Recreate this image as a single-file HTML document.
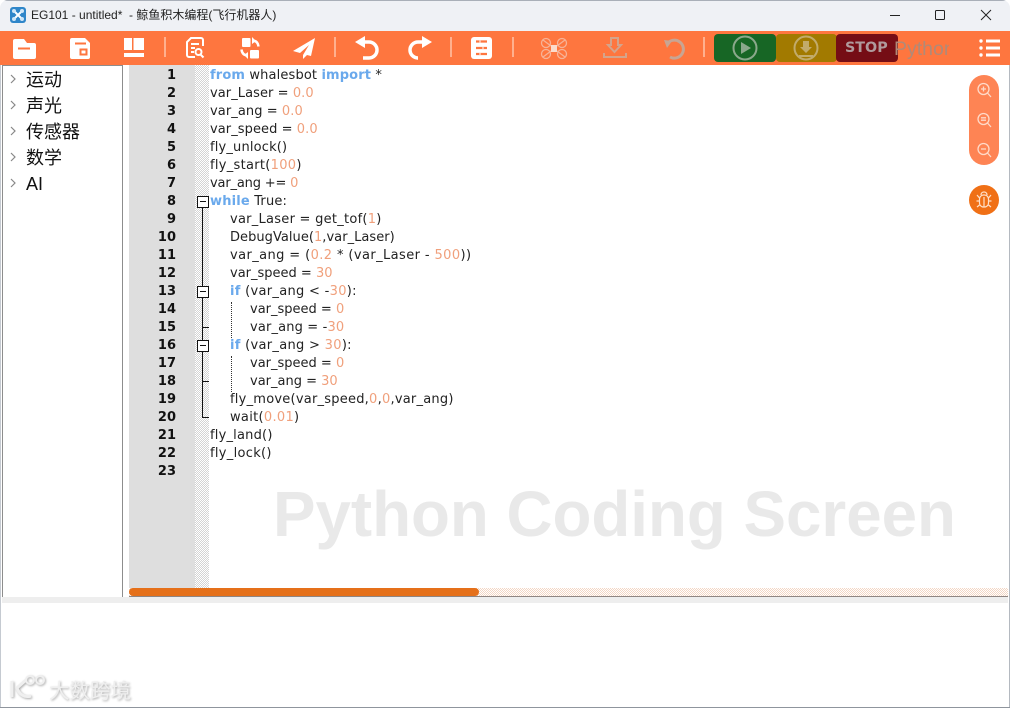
<!DOCTYPE html>
<html><head><meta charset="utf-8"><style>
html,body{margin:0;padding:0;width:1010px;height:708px;overflow:hidden;background:#fff}
*{box-sizing:border-box}
.a{position:absolute}
#code,#nums{position:absolute;left:0;top:4px}
#code div{position:absolute;left:210px;height:18px;white-space:pre;font:13px/18px "DejaVu Sans",sans-serif;color:#222}
b.k{color:#6aa9ec;font-weight:700}
i.n{color:#f0a07c;font-style:normal}
.ln{position:absolute;left:130px;width:46px;text-align:right;font:bold 13px/18px "DejaVu Sans",sans-serif;color:#111}
.tree{position:absolute;left:26px;font:18px/26px "Liberation Sans","Noto Sans CJK SC",sans-serif;color:#111}
.box{position:absolute;left:197px;width:12px;height:12px;border:1px solid #111;background:#fff}
.box:after{content:"";position:absolute;left:2px;top:4px;width:6px;height:1px;background:#111}
</style></head><body>
<div class="a" style="left:0;top:0;width:1010px;height:708px;background:#fff;border-radius:8px 8px 0 0;overflow:hidden">
<div class="a" style="left:0;top:0;width:1010px;height:31px;background:#eff1f5"></div>
<div class="a" style="left:0;top:0;width:1010px;height:1px;background:#a9afb8"></div>
<svg class="a" style="left:10px;top:7px" width="16" height="16" viewBox="0 0 16 16"><rect width="16" height="16" rx="3" fill="#2f86c9"/><path d="M4 4l8 8M12 4l-8 8" stroke="#fff" stroke-width="2"/><circle cx="4" cy="4" r="2" fill="#cfe6f7"/><circle cx="12" cy="4" r="2" fill="#cfe6f7"/><circle cx="4" cy="12" r="2" fill="#cfe6f7"/><circle cx="12" cy="12" r="2" fill="#cfe6f7"/></svg>
<div class="a" style="left:31px;top:7px;font:12px/17px 'Liberation Sans','Noto Sans CJK SC',sans-serif;color:#222;white-space:pre">EG101 - untitled*  - 鲸鱼积木编程(飞行机器人)</div>
<svg class="a" style="left:890px;top:0" width="120" height="31" viewBox="0 0 120 31" fill="none" stroke="#222" stroke-width="1"><path d="M0 15.500h10"/><rect x="45.500" y="10.500" width="9" height="9" rx="1"/><path d="M91 10l10 10M101 10l-10 10"/></svg>

<div class="a" style="left:0;top:31px;width:1010px;height:34px;background:#fe763f"></div>
<svg class="a" style="left:0;top:31px" width="1010" height="34" viewBox="0 0 1010 34">
<g fill="#fff">
<path d="M13 10a2 2 0 0 1 2-2h9l3 4h7a2 2 0 0 1 2 2v12a2 2 0 0 1-2 2H15a2 2 0 0 1-2-2z"/>
<path d="M72 7h13l5 5v14a2 2 0 0 1-2 2H72a2 2 0 0 1-2-2V9a2 2 0 0 1 2-2z"/>
<path d="M124 7h8v12h-8zM133.500 7h10.500v12h-10.500zM124 22h20v4h-20z"/>
</g>
<path d="M18 17.500h12" stroke="#fe763f" stroke-width="2"/>
<path d="M75 12.500h11" stroke="#fe763f" stroke-width="2"/><rect x="80.500" y="18.500" width="6" height="5" fill="none" stroke="#fe763f" stroke-width="2"/>
<g fill="none" stroke="#fff" stroke-width="2">
<path d="M195 26h-6a2 2 0 0 1-2-2V11l4-4h10a2 2 0 0 1 2 2v6"/><path d="M191 13h8M191 17h4M191 21h3"/><circle cx="198.500" cy="21" r="3"/><path d="M200.500 23.500l3 3"/>
<path d="M252 9.500c4 0 6 2 6.500 6M248 24.500c-4 0-6-2-6.500-6" stroke-width="2.500"/>
<path d="M363 11h6a8 8 0 0 1 0 16h-6" stroke-width="3.500"/>
<path d="M424 11h-6a8 8 0 0 0 0 16h-1" stroke-width="3.500"/>
</g>
<g fill="#fff">
<rect x="242" y="7" width="8.500" height="9" rx="1"/><rect x="250" y="19" width="9" height="8.500" rx="1"/>
<path d="M252 6l4 4-4 3zM248 21l-4 3 4 4z"/>
<path d="M315 7L293 20l7 2 9-8-6 10 0 4 4-4 4 1z"/>
<path d="M355 11l10-6v12z"/>
<path d="M432 11l-10-6v12z"/>
<path d="M474 6h15a3 3 0 0 1 3 3v16a3 3 0 0 1-3 3h-15a3 3 0 0 1-3-3V9a3 3 0 0 1 3-3z"/>
</g>
<path d="M476 10.500h11M476 17h11M476 23h11" stroke="#fe763f" stroke-width="2.200"/>
<path d="M480 9.500v2M480 22v2M483 16v2" stroke="#fff" stroke-width="1"/>
<g stroke="#ffb08e" stroke-width="2"><path d="M165 6v20M335 6v20M451 6v20M513 6v20M704 6v20"/></g>
<g fill="none" stroke="#f7b296" stroke-width="1.300"><circle cx="546" cy="12" r="4.500"/><circle cx="562" cy="12" r="4.500"/><circle cx="546" cy="23" r="4.500"/><circle cx="562" cy="23" r="4.500"/><path d="M543 9l8 6M565 9l-8 6M543 26l8-6M565 26l-8-6"/></g>
<rect x="551" y="14" width="6" height="7" fill="#fbdccd"/>
<path d="M611 7h7v7h3l-6.500 7-6.500-7h3zM604 22v4h22v-4" fill="none" stroke="#d4a48c" stroke-width="2"/>
<path d="M667 13a9 9 0 1 1 3 13" fill="none" stroke="#c8a593" stroke-width="3"/><path d="M664 9l8 1-5 7z" fill="#c8a593"/>
<rect x="714" y="3" width="62" height="28" rx="4" fill="#176625"/>
<rect x="776" y="3" width="61" height="28" rx="4" fill="#a27a00"/>
<rect x="836" y="3" width="62" height="28" rx="4" fill="#750d15"/>
<circle cx="745" cy="17" r="11.500" fill="none" stroke="#8aa88b" stroke-width="2"/><path d="M741 11l10 6-10 6z" fill="#8aa88b"/>
<circle cx="806" cy="17" r="11.500" fill="none" stroke="#c2ab6a" stroke-width="2"/><path d="M803 10h6v6h3l-6 6-6-6h3z" fill="#c2ab6a"/><path d="M799 25h14" stroke="#c2ab6a" stroke-width="2"/>
<g fill="#fff"><circle cx="981" cy="10" r="1.700"/><circle cx="981" cy="17" r="1.700"/><circle cx="981" cy="24" r="1.700"/><rect x="986" y="8.500" width="14" height="3"/><rect x="986" y="15.500" width="14" height="3"/><rect x="986" y="22.500" width="14" height="3"/></g>
</svg>
<div class="a" style="left:845px;top:40px;font:bold 14.300px/16px 'DejaVu Sans',sans-serif;color:#b09a9c">STOP</div>
<div class="a" style="left:894px;top:38px;width:55px;overflow:hidden;font:19.500px/22px 'Liberation Sans',sans-serif;color:#b08a78;white-space:nowrap">Python</div>

<div class="a" style="left:2px;top:65px;width:121px;height:533px;background:#fff;border:1px solid #8d8d8d"></div>
<svg class="a" style="left:8px;top:72px" width="10" height="120" viewBox="0 0 10 120" fill="none" stroke="#888" stroke-width="1.200"><path d="M3 3l4 4-4 4M3 29l4 4-4 4M3 55l4 4-4 4M3 81l4 4-4 4M3 107l4 4-4 4"/></svg>
<div class="tree" style="top:67px">运动</div>
<div class="tree" style="top:93px">声光</div>
<div class="tree" style="top:119px">传感器</div>
<div class="tree" style="top:145px">数学</div>
<div class="tree" style="top:171px">AI</div>

<div class="a" style="left:129px;top:65px;width:66px;height:523px;background:#dedede"></div>
<div class="a" style="left:195px;top:65px;width:14px;height:523px;background:repeating-conic-gradient(#d4d4d4 0 25%,#fff 0 50%) 0 0/2px 2px"></div>

<div id="nums">
<div class="ln" style="top:63px">1</div><div class="ln" style="top:81px">2</div><div class="ln" style="top:99px">3</div><div class="ln" style="top:117px">4</div><div class="ln" style="top:135px">5</div><div class="ln" style="top:153px">6</div><div class="ln" style="top:171px">7</div><div class="ln" style="top:189px">8</div><div class="ln" style="top:207px">9</div><div class="ln" style="top:225px">10</div><div class="ln" style="top:243px">11</div><div class="ln" style="top:261px">12</div><div class="ln" style="top:279px">13</div><div class="ln" style="top:297px">14</div><div class="ln" style="top:315px">15</div><div class="ln" style="top:333px">16</div><div class="ln" style="top:351px">17</div><div class="ln" style="top:369px">18</div><div class="ln" style="top:387px">19</div><div class="ln" style="top:405px">20</div><div class="ln" style="top:423px">21</div><div class="ln" style="top:441px">22</div><div class="ln" style="top:459px">23</div>
</div>

<div class="a" style="left:202px;top:207px;width:1px;height:210px;background:#111"></div>
<div class="a" style="left:202px;top:417px;width:7px;height:1px;background:#111"></div>
<div class="a" style="left:202px;top:327px;width:7px;height:1px;background:#111"></div>
<div class="a" style="left:202px;top:381px;width:7px;height:1px;background:#111"></div>
<div class="box" style="top:196px"></div><div class="box" style="top:286px"></div><div class="box" style="top:340px"></div>
<div class="a" style="left:231px;top:302px;height:36px;border-left:1px dotted #333"></div>
<div class="a" style="left:231px;top:356px;height:36px;border-left:1px dotted #333"></div>

<div id="code">
<div style="top:63px;letter-spacing:.14px"><b class="k">from</b> whalesbot <b class="k">import</b> *</div>
<div style="top:81px;letter-spacing:.07px">var_Laser = <i class="n">0.0</i></div>
<div style="top:99px;letter-spacing:.08px">var_ang = <i class="n">0.0</i></div>
<div style="top:117px;letter-spacing:.07px">var_speed = <i class="n">0.0</i></div>
<div style="top:135px;letter-spacing:.17px">fly_unlock()</div>
<div style="top:153px;letter-spacing:.29px">fly_start(<i class="n">100</i>)</div>
<div style="top:171px;letter-spacing:-.17px">var_ang += <i class="n">0</i></div>
<div style="top:189px;letter-spacing:.18px"><b class="k">while</b> True:</div>
<div style="top:207px;left:230px;letter-spacing:.26px">var_Laser = get_tof(<i class="n">1</i>)</div>
<div style="top:225px;left:230px;letter-spacing:.04px">DebugValue(<i class="n">1</i>,var_Laser)</div>
<div style="top:243px;left:230px;letter-spacing:.4px">var_ang = (<i class="n">0.2</i> * (var_Laser - <i class="n">500</i>))</div>
<div style="top:261px;left:230px">var_speed = <i class="n">30</i></div>
<div style="top:279px;left:230px;letter-spacing:.3px"><b class="k">if</b> (var_ang &lt; -<i class="n">30</i>):</div>
<div style="top:297px;left:250px">var_speed = <i class="n">0</i></div>
<div style="top:315px;left:250px;letter-spacing:.15px">var_ang = -<i class="n">30</i></div>
<div style="top:333px;left:230px;letter-spacing:.3px"><b class="k">if</b> (var_ang &gt; <i class="n">30</i>):</div>
<div style="top:351px;left:250px">var_speed = <i class="n">0</i></div>
<div style="top:369px;left:250px">var_ang = <i class="n">30</i></div>
<div style="top:387px;left:230px;letter-spacing:.23px">fly_move(var_speed,<i class="n">0</i>,<i class="n">0</i>,var_ang)</div>
<div style="top:405px;left:230px;letter-spacing:.3px">wait(<i class="n">0.01</i>)</div>
<div style="top:423px;letter-spacing:.2px">fly_land()</div>
<div style="top:441px;letter-spacing:.3px">fly_lock()</div>
</div>

<div class="a" style="left:273px;top:477px;font:bold 63.700px/76px 'Liberation Sans',sans-serif;color:#e9e9e9;white-space:pre">Python Coding Screen</div>

<div class="a" style="left:969px;top:75px;width:30px;height:90px;border-radius:15px;background:#fe8454"></div>
<svg class="a" style="left:969px;top:75px" width="30" height="90" viewBox="0 0 30 90" fill="none" stroke="#ffd9c7" stroke-width="1.300"><circle cx="14.500" cy="14" r="5.500"/><path d="M18.500 18l3.500 4M12 14h5M14.500 11.500v5"/><circle cx="14.500" cy="44" r="5.500"/><path d="M18.500 48l3.500 4M12 42.800h5M12 45.200h5"/><circle cx="14.500" cy="74" r="5.500"/><path d="M18.500 78l3.500 4M12 74h5"/></svg>
<div class="a" style="left:969px;top:185px;width:30px;height:30px;border-radius:50%;background:#f07016"></div>
<svg class="a" style="left:969px;top:185px" width="30" height="30" viewBox="0 0 30 30" fill="none" stroke="#ffe0c8" stroke-width="1.200"><rect x="10.500" y="10" width="9" height="12" rx="4"/><path d="M12 10c0-4 6-4 6 0M15 12v10M8 10l2.500 3M22 10l-2.500 3M7.500 16h3M19.500 16h3M8 22l2.500-2M22 22l-2.500-2"/></svg>

<div class="a" style="left:129px;top:588px;width:879px;height:8px;background:repeating-conic-gradient(#f3d6c4 0 25%,#fff 0 50%) 0 0/2px 2px"></div>
<div class="a" style="left:129px;top:588px;width:350px;height:8px;border-radius:4px;background:#e5701a"></div>
<div class="a" style="left:129px;top:596px;width:879px;height:1px;background:#8f8582"></div>
<div class="a" style="left:2px;top:597px;width:1006px;height:6px;background:#eeeeee"></div>

<svg class="a" style="left:8px;top:672px;filter:drop-shadow(1px 1px 1px #aaa)" width="40" height="30" viewBox="0 0 40 30" fill="none" stroke="#efefef" stroke-width="3"><path d="M4 9v16M18 8L9 16c2 6 7 10 14 8"/><circle cx="22" cy="8" r="4" stroke-width="2"/><circle cx="32" cy="8" r="4" stroke-width="2"/></svg>
<div class="a" style="left:49px;top:676px;font:400 20.500px/27px 'Noto Sans CJK SC',sans-serif;color:#efefef;text-shadow:1px 1px 2px #aaa;white-space:pre">大数跨境</div>

<div class="a" style="left:0;top:65px;width:1px;height:643px;background:#c5cad1"></div>
<div class="a" style="left:1009px;top:65px;width:1px;height:643px;background:#b4b9c0"></div>
<div class="a" style="left:0;top:707px;width:1010px;height:1px;background:#8f959d"></div>
</div>
</body></html>
